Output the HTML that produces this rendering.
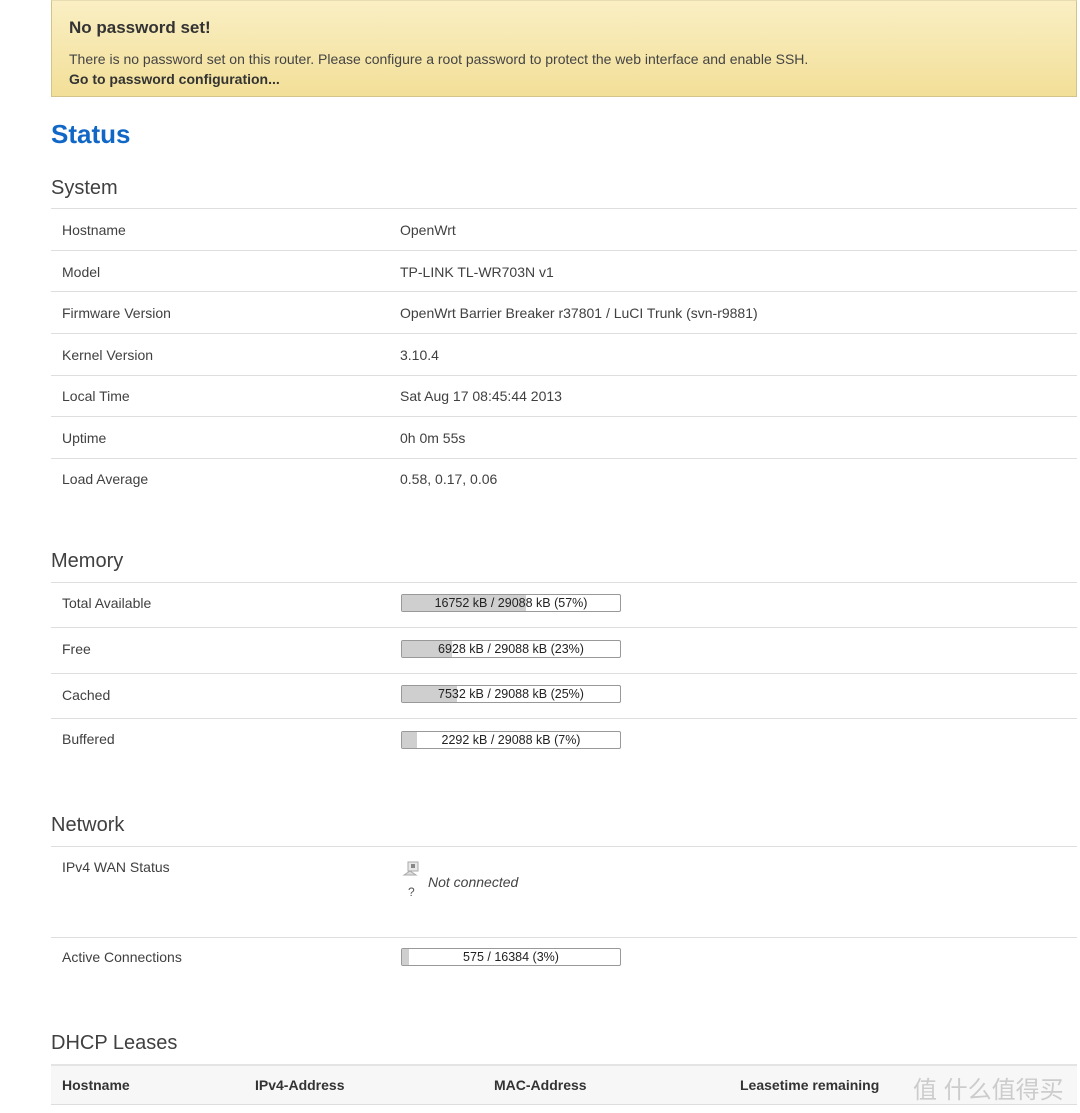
<!DOCTYPE html>
<html><head><meta charset="utf-8"><style>
*{margin:0;padding:0;box-sizing:border-box}
body{width:1080px;height:1113px;background:#fff;position:relative;overflow:hidden;font-family:"Liberation Sans",Arial,sans-serif;color:#404040}
.a{position:absolute;white-space:nowrap}
.alert{position:absolute;left:51px;top:0;width:1026px;height:97px;background:linear-gradient(#faefc4,#f2df98);border:1px solid #d3c48a;border-top-color:#e8dcb0}
.l{position:absolute;left:51px;width:1026px;height:1px;background:#dedede}
.lab{position:absolute;left:62px;font-size:14px;color:#404040}
.val{position:absolute;left:400px;font-size:14px;color:#404040}
.h2{position:absolute;left:51px;font-size:20px;color:#404040}
.bar{position:absolute;left:401px;width:220px;height:18px;border:1px solid #999;border-radius:2px;background:#fff;overflow:hidden;font-size:12.5px;color:#222;text-align:center;line-height:17px}
.bar i{position:absolute;left:0;top:0;bottom:0;background:#cfcfcf}
.bar span{position:relative}
.th{position:absolute;top:1077px;font-size:14px;font-weight:bold;color:#333}
</style></head><body>
<div class="alert"></div>
<div class="a" style="left:69px;top:18px;font-size:17px;font-weight:bold;color:#333">No password set!</div>
<div class="a" style="left:69px;top:51px;font-size:14px;color:#444">There is no password set on this router. Please configure a root password to protect the web interface and enable SSH.</div>
<div class="a" style="left:69px;top:71px;font-size:14px;font-weight:bold;color:#333">Go to password configuration...</div>
<div class="a" style="left:51px;top:119px;font-size:26px;font-weight:bold;color:#1167c6">Status</div>

<div class="h2" style="top:177px">System</div>
<div class="l" style="top:208px"></div>
<div class="lab" style="top:222px">Hostname</div><div class="val" style="top:222px">OpenWrt</div>
<div class="l" style="top:250px"></div>
<div class="lab" style="top:264px">Model</div><div class="val" style="top:264px">TP-LINK TL-WR703N v1</div>
<div class="l" style="top:291px"></div>
<div class="lab" style="top:305px">Firmware Version</div><div class="val" style="top:305px">OpenWrt Barrier Breaker r37801 / LuCI Trunk (svn-r9881)</div>
<div class="l" style="top:333px"></div>
<div class="lab" style="top:347px">Kernel Version</div><div class="val" style="top:347px">3.10.4</div>
<div class="l" style="top:375px"></div>
<div class="lab" style="top:388px">Local Time</div><div class="val" style="top:388px">Sat Aug 17 08:45:44 2013</div>
<div class="l" style="top:416px"></div>
<div class="lab" style="top:430px">Uptime</div><div class="val" style="top:430px">0h 0m 55s</div>
<div class="l" style="top:458px"></div>
<div class="lab" style="top:471px">Load Average</div><div class="val" style="top:471px">0.58, 0.17, 0.06</div>

<div class="h2" style="top:550px">Memory</div>
<div class="l" style="top:582px"></div>
<div class="lab" style="top:595px">Total Available</div>
<div class="bar" style="top:594px"><i style="width:57%"></i><span>16752 kB / 29088 kB (57%)</span></div>
<div class="l" style="top:627px"></div>
<div class="lab" style="top:641px">Free</div>
<div class="bar" style="top:640px"><i style="width:23%"></i><span>6928 kB / 29088 kB (23%)</span></div>
<div class="l" style="top:673px"></div>
<div class="lab" style="top:687px">Cached</div>
<div class="bar" style="top:685px"><i style="width:25%"></i><span>7532 kB / 29088 kB (25%)</span></div>
<div class="l" style="top:718px"></div>
<div class="lab" style="top:731px">Buffered</div>
<div class="bar" style="top:731px"><i style="width:7%"></i><span>2292 kB / 29088 kB (7%)</span></div>

<div class="h2" style="top:814px">Network</div>
<div class="l" style="top:846px"></div>
<div class="lab" style="top:859px">IPv4 WAN Status</div>
<svg class="a" style="left:402px;top:860px" width="18" height="18" viewBox="0 0 18 18"><rect x="6" y="2" width="10" height="9" fill="#e8e8e8" stroke="#aaa"/><rect x="9" y="4" width="4" height="4" fill="#888"/><path d="M2 15 L8 11 L14 15 Z" fill="#ddd" stroke="#aaa"/></svg>
<div class="a" style="left:408px;top:885px;font-size:12px;color:#555">?</div>
<div class="a" style="left:428px;top:874px;font-size:14px;font-style:italic;color:#444">Not connected</div>
<div class="l" style="top:937px"></div>
<div class="lab" style="top:949px">Active Connections</div>
<div class="bar" style="top:948px"><i style="width:3%"></i><span>575 / 16384 (3%)</span></div>

<div class="h2" style="top:1032px">DHCP Leases</div>
<div class="a" style="left:51px;top:1064px;width:1026px;height:41px;background:#f7f7f7;border-top:2px solid #e4e4e4;border-bottom:1px solid #ddd"></div>
<div class="th" style="left:62px">Hostname</div>
<div class="th" style="left:255px">IPv4-Address</div>
<div class="th" style="left:494px">MAC-Address</div>
<div class="th" style="left:740px">Leasetime remaining</div>
<div class="a" style="left:913px;top:1070px;font-size:24px;color:#ccc;font-family:'Liberation Sans','Noto Sans CJK SC',sans-serif">值 什么值得买</div>
</body></html>
